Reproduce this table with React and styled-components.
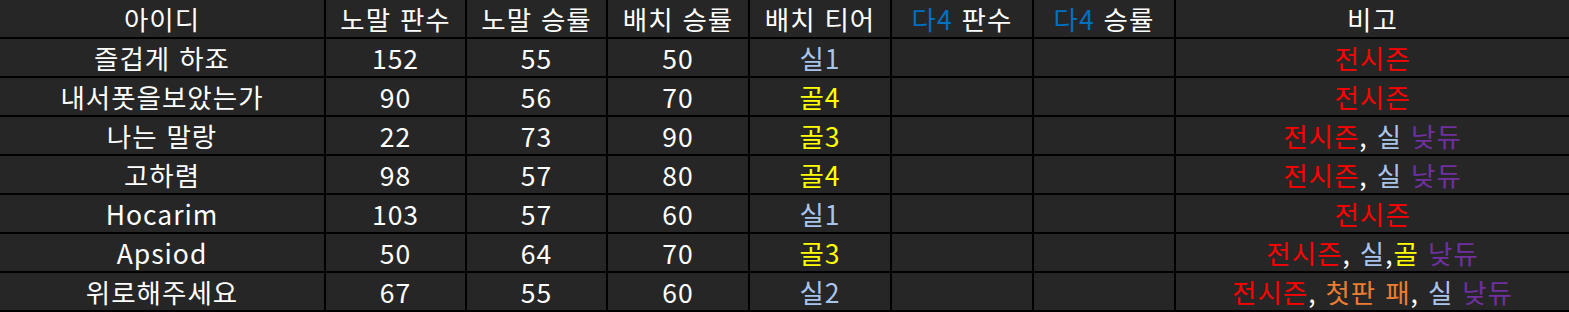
import React from 'react';
import styled, { createGlobalStyle } from 'styled-components';

const GlobalStyle = createGlobalStyle`
  html, body {
    margin: 0;
    padding: 0;
    background: #000;
  }
  body {
    font-family: 'Noto Sans CJK KR', 'Noto Sans', sans-serif;
  }
`;

const StyledTable = styled.div`
  display: grid;
  grid-template-columns: 324px 139px 139px 140px 140px 140px 140px 1fr;
  grid-auto-rows: 37px;
  gap: 2px;
  width: 1569px;
  height: 312px;
  background: #000;
  overflow: hidden;
`;

const StyledCell = styled.div`
  display: flex;
  align-items: center;
  justify-content: center;
  background: #262626;
  color: #fff;
  font-size: 26.5px;
  line-height: 34px;
`;

const StyledText = styled.span`
  white-space: pre;
  letter-spacing: 1px;
  word-spacing: 2px;
`;

const C = styled.span`
  color: ${({ $c }) => $c};
`;

const RED = '#ff0000';
const YEL = '#ffff00';
const SIL = '#a9c4eb';
const PUR = '#7030a0';
const ORG = '#ed7d31';
const BLU = '#0070c0';

const Cell = ({ children }) => (
  <StyledCell>
    <StyledText>{children}</StyledText>
  </StyledCell>
);

const Tier = ({ t }) => <C $c={t.startsWith('골') ? YEL : SIL}>{t}</C>;

const rows = [
  { id: '즐겁게 하죠', games: 152, win: 55, place: 50, tier: '실1', note: 'a' },
  { id: '내서폿을보았는가', games: 90, win: 56, place: 70, tier: '골4', note: 'a' },
  { id: '나는 말랑', games: 22, win: 73, place: 90, tier: '골3', note: 'b' },
  { id: '고하렴', games: 98, win: 57, place: 80, tier: '골4', note: 'b' },
  { id: 'Hocarim', games: 103, win: 57, place: 60, tier: '실1', note: 'a' },
  { id: 'Apsiod', games: 50, win: 64, place: 70, tier: '골3', note: 'c' },
  { id: '위로해주세요', games: 67, win: 55, place: 60, tier: '실2', note: 'd' },
];

const Note = ({ kind }) => {
  if (kind === 'a') return <C $c={RED}>전시즌</C>;
  if (kind === 'b')
    return (
      <>
        <C $c={RED}>전시즌</C>{', '}<C $c={SIL}>실</C>{' '}<C $c={PUR}>낮듀</C>
      </>
    );
  if (kind === 'c')
    return (
      <>
        <C $c={RED}>전시즌</C>{', '}<C $c={SIL}>실</C>{','}<C $c={YEL}>골</C>{' '}<C $c={PUR}>낮듀</C>
      </>
    );
  return (
    <>
      <C $c={RED}>전시즌</C>{', '}<C $c={ORG}>첫판 패</C>{', '}<C $c={SIL}>실</C>{' '}<C $c={PUR}>낮듀</C>
    </>
  );
};

const App = () => (
  <>
    <GlobalStyle />
    <StyledTable>
      <Cell>아이디</Cell>
      <Cell>노말 판수</Cell>
      <Cell>노말 승률</Cell>
      <Cell>배치 승률</Cell>
      <Cell>배치 티어</Cell>
      <Cell>
        <C $c={BLU}>다4</C>{' 판수'}
      </Cell>
      <Cell>
        <C $c={BLU}>다4</C>{' 승률'}
      </Cell>
      <Cell>비고</Cell>
      {rows.map((r) => (
        <React.Fragment key={r.id}>
          <Cell>{r.id}</Cell>
          <Cell>{r.games}</Cell>
          <Cell>{r.win}</Cell>
          <Cell>{r.place}</Cell>
          <Cell>
            <Tier t={r.tier} />
          </Cell>
          <Cell />
          <Cell />
          <Cell>
            <Note kind={r.note} />
          </Cell>
        </React.Fragment>
      ))}
    </StyledTable>
  </>
);

export default App;
